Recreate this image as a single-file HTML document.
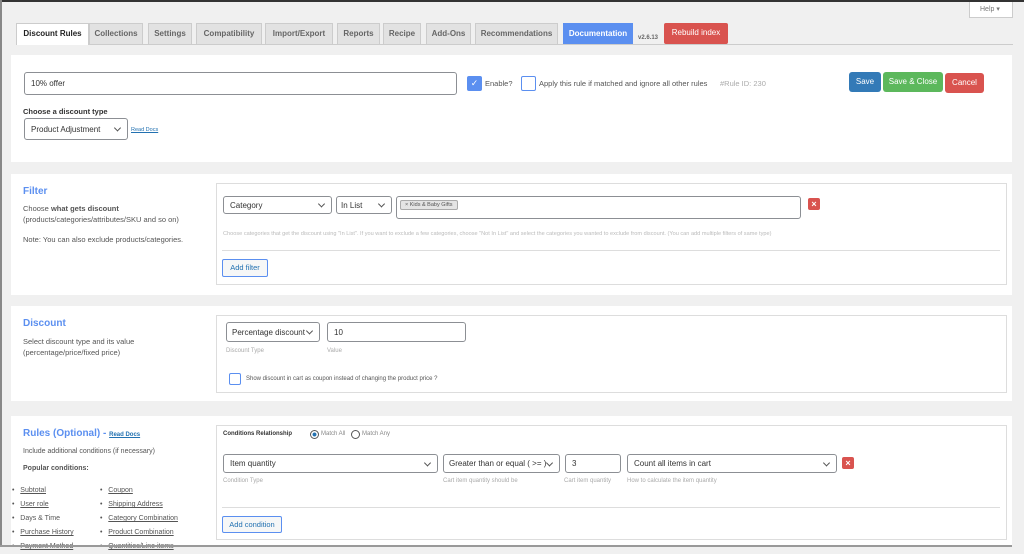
<!DOCTYPE html>
<html><head><meta charset="utf-8"><style>
*{box-sizing:border-box;margin:0;padding:0}
body{width:1024px;height:547px;overflow:hidden;background:#f0f0f0;font-family:"Liberation Sans",sans-serif;color:#444;position:relative;font-size:8px}
.a{position:absolute}
.tab{position:absolute;top:23px;height:21px;background:#e2e2e2;border:1px solid #ccc;border-bottom:none;font-size:8px;font-weight:bold;color:#666;text-align:center;line-height:20px}
.panel{position:absolute;left:11px;width:1001px;background:#fff}
.box{position:absolute;left:216px;width:791px;border:1px solid #ddd;background:#fff}
.inp{position:absolute;border:1px solid #8c8f94;border-radius:3px;background:#fff;font-size:8px;color:#333;padding-left:6px;display:flex;align-items:center}
.sel::after{content:"";position:absolute;right:7px;top:50%;width:4px;height:4px;border-right:1px solid #555;border-bottom:1px solid #555;transform:translateY(-70%) rotate(45deg)}
.btn{position:absolute;color:#fff;font-size:8px;text-align:center;border-radius:3px}
.lbl{position:absolute;font-size:6px;color:#aaa}
.x{position:absolute;width:12px;height:12px;background:#d9534f;border-radius:2px;color:#fff;font-size:9px;line-height:12px;text-align:center;font-weight:bold}
.ttl{position:absolute;left:23px;color:#5b8ff0;font-weight:bold;font-size:10px}
.t{position:absolute;font-size:7.5px;color:#555;white-space:nowrap}
.u{text-decoration:underline}
.cb{position:absolute;border:1px solid #5b8ff0;border-radius:2px;background:#fff}
.addb{position:absolute;border:1px solid #5b8ff0;border-radius:2px;background:#f6f7f7;color:#2271b1;font-size:7.5px;text-align:center}
</style></head><body>
<div class="a" style="left:0;top:0;width:1024px;height:2px;background:#333"></div>
<div class="a" style="left:0;top:0;width:2px;height:547px;background:#888"></div>
<div class="a" style="left:969px;top:2px;width:44px;height:16px;background:#fff;border:1px solid #ccc;border-top:none;font-size:7px;color:#777;line-height:15px;padding-left:10px">Help ▾</div>
<div class="a" style="left:16px;top:44px;width:997px;height:1px;background:#ccc"></div>
<div class="tab" style="left:16px;width:73px;background:#fff;color:#222;height:22px">Discount Rules</div>
<div class="tab" style="left:89px;width:54px">Collections</div>
<div class="tab" style="left:148px;width:44px">Settings</div>
<div class="tab" style="left:196px;width:66px">Compatibility</div>
<div class="tab" style="left:265px;width:68px">Import/Export</div>
<div class="tab" style="left:337px;width:43px">Reports</div>
<div class="tab" style="left:383px;width:38px">Recipe</div>
<div class="tab" style="left:426px;width:45px">Add-Ons</div>
<div class="tab" style="left:475px;width:83px">Recommendations</div>
<div class="tab" style="left:563px;width:70px;background:#5b8ff0;border-color:#5b8ff0;color:#fff">Documentation</div>
<div class="t" style="left:638px;top:35px;font-size:6px;font-weight:bold;color:#666">v2.6.13</div>
<div class="tab" style="left:664px;width:64px;background:#d9534f;border-color:#d9534f;color:#fff;font-weight:normal;height:21px;border-radius:2px;line-height:18px">Rebuild index</div>

<div class="panel" style="top:55px;height:107px"></div>
<div class="inp" style="left:24px;top:72px;width:433px;height:23px">10% offer</div>
<div class="a" style="left:467px;top:76px;width:15px;height:15px;background:#5b8ff0;border-radius:2px;color:#fff;font-size:9px;text-align:center;line-height:15px">✓</div>
<div class="t" style="left:485px;top:79px">Enable?</div>
<div class="cb" style="left:521px;top:76px;width:15px;height:15px"></div>
<div class="t" style="left:539px;top:79px">Apply this rule if matched and ignore all other rules</div>
<div class="t" style="left:720px;top:79px;color:#aaa">#Rule ID: 230</div>
<div class="btn" style="left:849px;top:72px;width:32px;height:20px;background:#337ab7;line-height:20px">Save</div>
<div class="btn" style="left:883px;top:72px;width:60px;height:20px;background:#5cb85c;line-height:20px">Save &amp; Close</div>
<div class="btn" style="left:945px;top:73px;width:39px;height:20px;background:#d9534f;line-height:20px">Cancel</div>
<div class="t" style="left:23px;top:107px;font-weight:bold;color:#333">Choose a discount type</div>
<div class="inp sel" style="left:24px;top:118px;width:104px;height:22px">Product Adjustment</div>
<div class="t u" style="left:131px;top:127px;font-size:5.5px;color:#2271b1">Read Docs</div>

<div class="panel" style="top:174px;height:121px"></div>
<div class="ttl" style="top:186px">Filter</div>
<div class="t" style="top:204px;left:23px">Choose <b>what gets discount</b></div>
<div class="t" style="top:215px;left:23px">(products/categories/attributes/SKU and so on)</div>
<div class="t" style="top:235px;left:23px">Note: You can also exclude products/categories.</div>
<div class="box" style="top:183px;height:102px"></div>
<div class="inp sel" style="left:223px;top:196px;width:109px;height:18px">Category</div>
<div class="inp sel" style="left:336px;top:196px;width:56px;height:18px;padding-left:4px">In List</div>
<div class="inp" style="left:396px;top:196px;width:405px;height:23px;align-items:flex-start;padding:3px 3px"><span style="background:#e4e4e4;border:1px solid #aaa;border-radius:2px;font-size:5.5px;color:#555;padding:1px 4px">× Kids &amp; Baby Gifts</span></div>
<div class="x" style="left:808px;top:198px">×</div>
<div class="t" style="left:223px;top:231px;font-size:5.6px;color:#bbb">Choose categories that get the discount using "In List". If you want to exclude a few categories, choose "Not In List" and select the categories you wanted to exclude from discount. (You can add multiple filters of same type)</div>
<div class="a" style="left:222px;top:250px;width:778px;height:1px;background:#ddd"></div>
<div class="addb" style="left:222px;top:259px;width:46px;height:18px;line-height:16px">Add filter</div>

<div class="panel" style="top:306px;height:95px"></div>
<div class="ttl" style="top:318px">Discount</div>
<div class="t" style="top:337px;left:23px">Select discount type and its value</div>
<div class="t" style="top:348px;left:23px">(percentage/price/fixed price)</div>
<div class="box" style="top:315px;height:78px"></div>
<div class="inp sel" style="left:226px;top:322px;width:94px;height:20px;padding-left:5px">Percentage discount</div>
<div class="inp" style="left:327px;top:322px;width:139px;height:20px">10</div>
<div class="lbl" style="left:226px;top:348px">Discount Type</div>
<div class="lbl" style="left:327px;top:348px">Value</div>
<div class="cb" style="left:229px;top:373px;width:12px;height:12px"></div>
<div class="t" style="left:246px;top:376px;font-size:6px">Show discount in cart as coupon instead of changing the product price ?</div>

<div class="panel" style="top:416px;height:131px"></div>
<div class="ttl" style="top:428px">Rules (Optional) - <span class="u" style="font-size:6px;color:#2271b1">Read Docs</span></div>
<div class="t" style="top:448px;left:23px;font-size:7px">Include additional conditions (if necessary)</div>
<div class="t" style="top:465px;left:23px;font-weight:bold;font-size:7px">Popular conditions:</div>
<div class="t" style="top:484px;left:12px;line-height:14px;font-size:7px">•&nbsp;&nbsp;&nbsp;<span class="u">Subtotal</span><br>•&nbsp;&nbsp;&nbsp;<span class="u">User role</span><br>•&nbsp;&nbsp;&nbsp;Days &amp; Time<br>•&nbsp;&nbsp;&nbsp;<span class="u">Purchase History</span><br>•&nbsp;&nbsp;&nbsp;<span class="u">Payment Method</span></div>
<div class="t" style="top:484px;left:100px;line-height:14px;font-size:7px">•&nbsp;&nbsp;&nbsp;<span class="u">Coupon</span><br>•&nbsp;&nbsp;&nbsp;<span class="u">Shipping Address</span><br>•&nbsp;&nbsp;&nbsp;<span class="u">Category Combination</span><br>•&nbsp;&nbsp;&nbsp;<span class="u">Product Combination</span><br>•&nbsp;&nbsp;&nbsp;<span class="u">Quantities/Line items</span></div>
<div class="box" style="top:425px;height:115px"></div>
<div class="t" style="left:223px;top:431px;font-size:6px;font-weight:bold;color:#333">Conditions Relationship</div>
<div class="a" style="left:310px;top:430px;width:9px;height:9px;border:1px solid #555;border-radius:50%;background:radial-gradient(#2271b1 35%,#fff 45%)"></div>
<div class="t" style="left:321px;top:431px;font-size:6px;color:#888">Match All</div>
<div class="a" style="left:351px;top:430px;width:9px;height:9px;border:1px solid #555;border-radius:50%"></div>
<div class="t" style="left:362px;top:431px;font-size:6px;color:#888">Match Any</div>
<div class="inp sel" style="left:223px;top:454px;width:215px;height:19px">Item quantity</div>
<div class="inp sel" style="left:443px;top:454px;width:117px;height:19px;padding-left:5px">Greater than or equal ( &gt;= )</div>
<div class="inp" style="left:565px;top:454px;width:56px;height:19px">3</div>
<div class="inp sel" style="left:627px;top:454px;width:210px;height:19px">Count all items in cart</div>
<div class="x" style="left:842px;top:457px">×</div>
<div class="lbl" style="left:223px;top:478px">Condition Type</div>
<div class="lbl" style="left:443px;top:478px">Cart item quantity should be</div>
<div class="lbl" style="left:564px;top:478px">Cart item quantity</div>
<div class="lbl" style="left:627px;top:478px">How to calculate the item quantity</div>
<div class="a" style="left:222px;top:507px;width:778px;height:1px;background:#ddd"></div>
<div class="addb" style="left:222px;top:516px;width:60px;height:17px;line-height:15px">Add condition</div>
<div class="a" style="left:0;top:545px;width:1012px;height:2px;background:#999"></div>
</body></html>
